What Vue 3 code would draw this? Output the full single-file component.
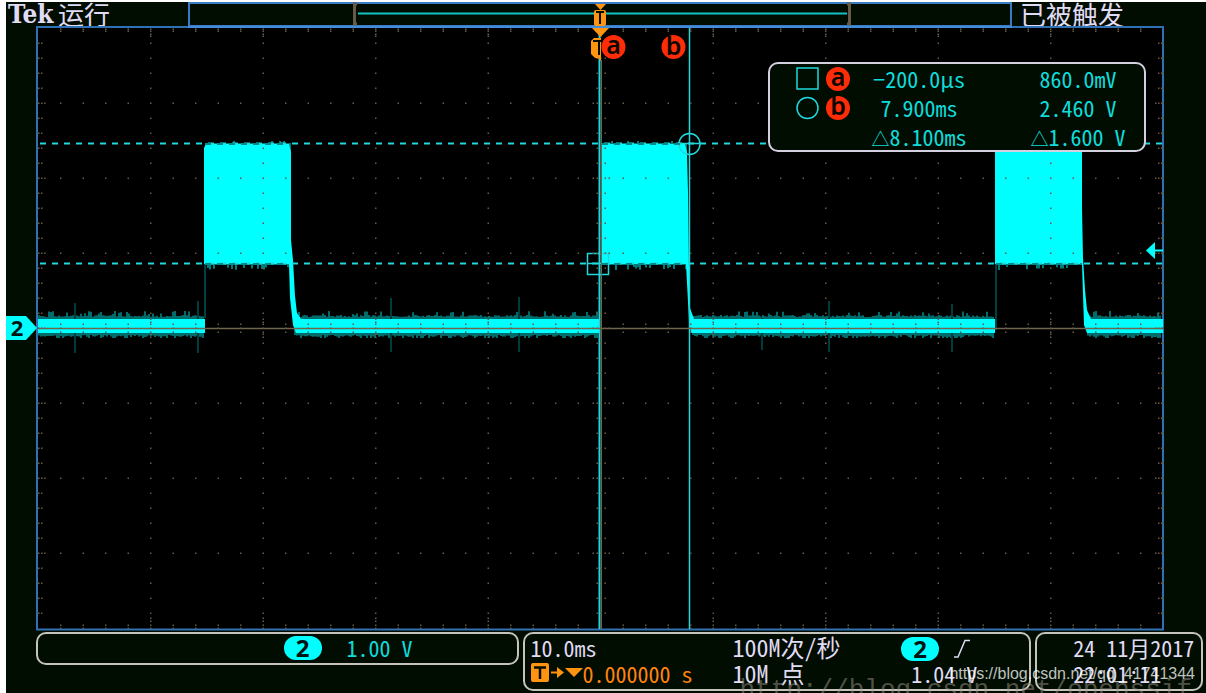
<script setup>
const div = { x: 112.5, y: 75 }
const cx = 600.5
const cy = 328
const range = (from, to) => Array.from({ length: to - from + 1 }, (_, i) => from + i)

const seg = (x, y) => `M${x.toFixed(1)} ${y - 0.5}h1.5v1.5h-1.5z`
let dots = ''
for (const i of range(-5, 5)) {
  for (const j of range(-19, 19)) dots += seg(cx + i * div.x - 0.5, cy + j * 15)
}
for (const j of range(-3, 3)) {
  for (const i of range(-24, 24)) dots += seg(cx + i * 22.5 - 0.5, cy + j * div.y)
}
for (const i of range(-24, 24)) {
  for (const o of [-4, 4]) dots += seg(cx + i * 22.5 - 0.5, cy + o)
  for (const y of [29, 31, 625, 628]) dots += seg(cx + i * 22.5 - 0.5, y)
}
for (const i of range(-4, 4)) {
  for (const y of [34, 36, 621, 618, cy - 9, cy - 6, cy + 6, cy + 9]) dots += seg(cx + i * div.x - 0.5, y)
}
for (const j of range(-19, 19)) {
  for (const x of [38, 41, cx - 4, cx + 4, 1158, 1161]) dots += seg(x, cy + j * 15)
}
for (const j of range(-3, 3)) {
  for (const x of [44, cx - 8, cx + 8, 1155]) dots += seg(x, cy + j * div.y)
}

let state = 7
const rand = () => {
  state = (state * 16807) % 2147483647
  return state / 2147483647
}

const lows = [[38, 205], [294, 600], [692, 995], [1087, 1163]]
let fringe = ''
for (const [a, b] of lows) {
  for (let x = a; x < b - 2; x += 2) {
    const up = rand() > 0.85 ? 3 + rand() * 3 : rand() * 2
    const down = rand() > 0.8 ? 3 : rand() * 2
    fringe += `M${x} ${(317 - up).toFixed(1)}h2v${(18 + up + down).toFixed(1)}h-2z`
  }
}
const bursts = [[205, 291, 144], [601, 687, 144], [996, 1082, 150]]
let ragged = ''
for (const [a, b, top] of bursts) {
  for (let x = a; x < b - 1; x += 2) {
    const up = rand() > 0.9 ? 2 : 0
    const down = rand() > 0.75 ? 2 + rand() * 3 : 0
    ragged += `M${x} ${top - 1 - up}h2v${(122 + up + down - (top - 144)).toFixed(1)}h-2z`
  }
}
const spikes = [[75, 303, 353], [198, 301, 353], [391, 298, 352], [519, 297, 352], [762, 318, 350], [829, 301, 352], [952, 304, 352]]
const readings = [
  { shape: 'square', tag: 'a', delta: '', time: '−200.0µs', volt: '860.0mV' },
  { shape: 'circle', tag: 'b', delta: '', time: '7.900ms', volt: '2.460 V' },
  { shape: '', tag: '', delta: '△', time: '8.100ms', volt: '1.600 V' },
]
</script>

<template>
  <main class="scope">
    <header class="top">
      <div class="status"><b class="brand">Tek</b><span>运行</span></div>
      <svg class="overview" viewBox="188 2 824 25" preserveAspectRatio="none">
        <rect x="189" y="3" width="822" height="23" fill="none" stroke="#3a7cc4" stroke-width="2" />
        <path d="M358 13.500H847" stroke="#12c4c4" stroke-width="2" />
        <path d="M357 4h-2.500V24H357M847 4h2.500V24H847" fill="none" stroke="#655c48" stroke-width="3" />
        <path d="M595 4h11l-5.500 6z" fill="#ff9410" />
        <rect x="594" y="10" width="12" height="16" rx="2" fill="#ff9410" />
        <path d="M596 12h8M600 12v12" stroke="#000d00" stroke-width="2" />
      </svg>
      <div class="trigger">已被触发</div>
    </header>

    <section class="stage">
      <svg class="plot" viewBox="6 26 1200 605">
        <rect x="37" y="27" width="1126" height="602.500" fill="#000" stroke="#3070b4" stroke-width="2" />
        <path d="M188 27H1012" stroke="#438cdc" stroke-width="2" />

        <path :d="fringe" fill="#006c6c" />
        <path :d="ragged" fill="#007c7c" />
        <path v-for="s in spikes" :key="s[0]" :d="`M${s[0]} ${s[1]}V${s[2]}`" stroke="#003c3c" stroke-width="2" />
        <path d="M205 264V318M996 264V330" stroke="#008080" stroke-width="1" />
        <path d="M38 319H205V333H38zM297 319H600V333H297zM694 319H995V333H694zM1088 319H1163V333H1088z" fill="#0ff" />
        <path d="M204 148l2-4H289l2 8V240l2 20 2 36 2 17 4 6V333H296l-3-8-3-27-1-34H204z" fill="#0ff" />
        <path d="M601 144H685l2 8 1 40 1 78 1 38 4 11V333H691l-2-12-3-57H601z" fill="#0ff" />
        <path d="M995 150H1082V208l1 50 2 32 2 20 4 9V333H1087l-3-8-2-61H995z" fill="#0ff" />

        <g fill="none" stroke="#20d8dc" stroke-width="1.500">
          <path d="M40 143.500H1163M40 263.500H1163" stroke-dasharray="6 6" stroke-width="2" />
          <path d="M599.500 28V629" stroke-width="2" />
          <path d="M689.500 28V629" stroke-width="1.500" />
          <circle cx="689.500" cy="144" r="10.500" />
          <rect x="587.500" y="253.500" width="21" height="21" />
          <path d="M678 143.500h22M587 263.500h21" />
        </g>
        <path d="M205 144h84M205 264h84M602 144h84M602 264h84M996 264h86" stroke="#008c8c" stroke-width="2" stroke-dasharray="6 6" />
        <path d="M38 328.500H1163" stroke="#706650" stroke-width="1.500" />
        <path d="M601.500 60V629" stroke="#706650" stroke-width="1" />
        <path :d="dots" fill="#645c48" />

        <path d="M592 28h17l-8.500 9z" fill="#ff9410" />
        <path d="M601 38h-7l-3 3V54l4 4h3l3 3z" fill="#ff9410" />
        <path d="M593 41h8M599 41V55" stroke="#000d00" stroke-width="2" />
        <g class="tag">
          <circle cx="613.500" cy="47" r="12" /><text x="613.500" y="54">a</text>
          <circle cx="673.500" cy="47" r="12" /><text x="673.500" y="55">b</text>
        </g>
        <path d="M1163 250.500h-10" stroke="#0ff" stroke-width="2" />
        <path d="M1146 250.500l9-8.500v17z" fill="#0ff" />
        <path d="M6 316H26L37 328 26 340H6z" fill="#0ff" />
        <text class="channel" x="17" y="336">2</text>
      </svg>

      <table class="readout">
        <tbody>
          <tr v-for="r in readings" :key="r.time">
            <td class="marks">
              <svg v-if="r.tag" width="56" height="28" viewBox="0 0 56 28">
                <rect v-if="r.shape === 'square'" x="1" y="4" width="21" height="21" fill="none" stroke="#20d8dc" stroke-width="1.500" />
                <circle v-else cx="11.500" cy="15" r="10.500" fill="none" stroke="#20d8dc" stroke-width="1.500" />
                <g class="tag"><circle cx="42" cy="15" r="12" /><text x="42" y="22">{{ r.tag }}</text></g>
              </svg>
            </td>
            <td><span class="delta">{{ r.delta }}</span>{{ r.time }}</td>
            <td class="volt"><span class="delta">{{ r.delta }}</span>{{ r.volt }}</td>
          </tr>
        </tbody>
      </table>
    </section>

    <footer class="bottom">
      <div class="mark large">http://blog.csdn.net/openssif</div>
      <div class="box vertical"><span class="pill">2</span><span>1.00 V</span></div>
      <div class="box horizontal">
        <div class="col time">
          <span>10.0ms</span>
          <span class="delay">
            <svg width="52" height="20" viewBox="0 0 52 20">
              <rect x="0" y="0" width="18" height="19" rx="2" fill="#ff9410" />
              <path d="M3 4.500H15M9 4V16" stroke="#000d00" stroke-width="2.500" />
              <path d="M20 9.500h8" stroke="#ff9410" stroke-width="2" />
              <path d="M26 4l7 5.500-7 5.500zM34 5H52l-9 9z" fill="#ff9410" />
            </svg>0.000000 s</span>
        </div>
        <div class="col rate"><span>100M次/秒</span><span>10M 点</span></div>
        <div class="col source">
          <span class="edge"><i class="pill">2</i>
            <svg width="18" height="20" viewBox="0 0 18 20"><path d="M1 18h4L12 1.500h5" fill="none" stroke="#e0dcf4" stroke-width="1.500" /></svg>
          </span>
          <span class="level">1.04 V</span>
        </div>
      </div>
      <div class="box clock"><span>24 11月2017</span><span>22:01:11</span></div>
      <div class="mark small">https://blog.csdn.net/qq_41741344</div>
    </footer>
  </main>
</template>

<style>
body {
  margin: 0;
  background: #fff;
}
</style>

<style scoped>
.scope {
  box-sizing: border-box;
  min-height: 100vh;
  margin-left: 6px;
  border-top: 2px solid #fff;
  background: #000d00;
  color: #e0dcf4;
  font-family: "Noto Sans Mono CJK SC", "Noto Sans CJK SC", monospace;
  font-size: 22px;
  font-weight: 400;
  line-height: 26px;
  overflow: hidden;
}
.top {
  display: flex;
  height: 24px;
  font-size: 26px;
  line-height: 24px;
  white-space: nowrap;
}
.status {
  display: flex;
  gap: 5px;
  width: 180px;
  padding-left: 2px;
}
.brand {
  width: 45px;
  font: bold 26px/24px "DejaVu Serif Condensed", "DejaVu Serif", serif;
}
.overview {
  flex: 1;
  min-width: 0;
  height: 25px;
}
.trigger {
  width: 186px;
  padding-left: 8px;
}
.stage {
  position: relative;
}
.plot {
  display: block;
  width: 100%;
  height: auto;
}
.tag circle {
  fill: #ff2c08;
}
.tag text {
  fill: #0c0800;
  font: 600 25px "Noto Sans", sans-serif;
  text-anchor: middle;
}
.channel {
  fill: #001414;
  font: bold 22px "Noto Sans", sans-serif;
  text-anchor: middle;
}
.readout {
  box-sizing: border-box;
  position: absolute;
  top: 36px;
  right: 60px;
  width: 378px;
  height: 90px;
  border: 2px solid #d4d0e0;
  border-radius: 10px;
  border-spacing: 0;
  table-layout: fixed;
  background: #000d00;
  color: #10dcdc;
  text-align: center;
  white-space: nowrap;
}
.readout td {
  box-sizing: border-box;
  width: 134px;
  padding: 0;
  height: 28px;
  line-height: 28px;
}
.readout .marks {
  width: 82px;
  padding-left: 26px;
}
.readout .volt {
  width: 158px;
  padding-left: 26px;
}
.readout svg {
  display: block;
}
.delta {
  font-size: 18px;
  line-height: 20px;
}
.bottom {
  position: relative;
  display: grid;
  grid-template-columns: minmax(0, 483fr) minmax(0, 509fr) minmax(0, 168fr);
  gap: 4px;
  align-items: start;
  padding: 1px 3px 0 30px;
  white-space: nowrap;
}
.box {
  box-sizing: border-box;
  display: flex;
  border: 2px solid #c4c4bc;
  border-radius: 10px;
  height: 59px;
}
.vertical {
  height: 33px;
  align-items: flex-start;
  justify-content: flex-end;
  gap: 25px;
  padding-right: 104px;
  color: #10dcdc;
}
.vertical .pill {
  margin-top: 2px;
}
.horizontal {
  padding: 0 52px 0 6px;
}
.col,
.clock {
  display: flex;
  flex-direction: column;
}
.time {
  width: 202px;
}
.delay {
  display: flex;
  align-items: center;
  color: #ff8410;
}
.rate {
  font-size: 24px;
}
.source {
  margin-left: auto;
}
.clock {
  align-items: flex-start;
  padding-left: 36px;
}
.edge {
  box-sizing: border-box;
  display: flex;
  align-items: center;
  gap: 14px;
  height: 26px;
  padding-top: 3px;
}
.level {
  padding-left: 10px;
}
.pill {
  width: 38px;
  height: 24px;
  border-radius: 12px;
  background: #0ff;
  color: #001414;
  font: bold 24px/24px "Noto Sans", sans-serif;
  text-align: center;
}
.mark {
  position: absolute;
  line-height: 20px;
}
.small {
  right: 11px;
  top: 33px;
  color: rgba(255, 255, 255, 0.75);
  font-family: "Liberation Sans", sans-serif;
  font-size: 16px;
}
.large {
  right: 14px;
  top: 49px;
  color: rgba(160, 150, 140, 0.5);
  font-family: "Liberation Mono", monospace;
  font-size: 26px;
}
</style>
